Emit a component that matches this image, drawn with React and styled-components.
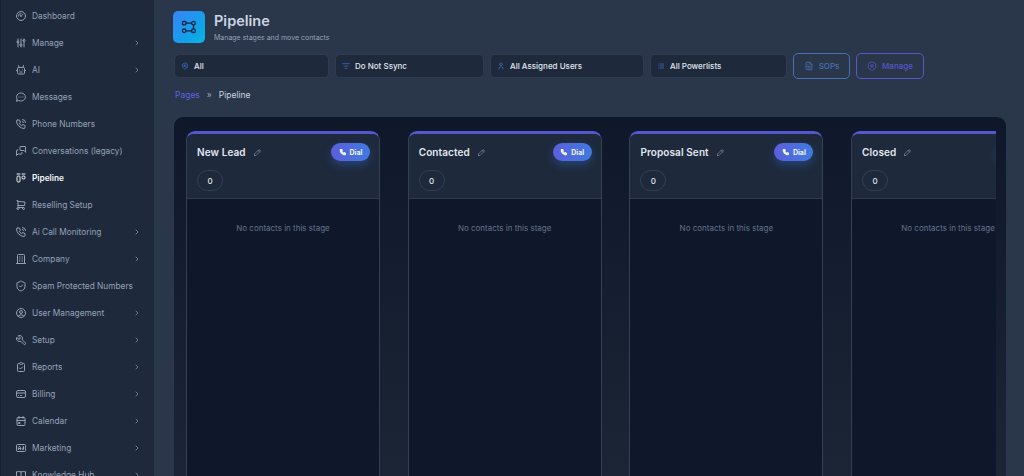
import React from 'react';
import styled, { createGlobalStyle } from 'styled-components';
import {
  TbGauge, TbAdjustments, TbPhoneCall, TbMessages,
  TbShoppingCart, TbBuilding, TbUserCircle, TbTool, TbClipboardCheck,
  TbCreditCard, TbCalendarEvent, TbAd, TbBook, TbChevronRight, TbMapPin,
  TbUser, TbList, TbFileText, TbSettings2, TbPencil, TbPhoneFilled, TbLayoutKanban,
} from 'react-icons/tb';
import { ShieldCheck, ListFilter } from 'lucide-react';

const Global = createGlobalStyle`
  html, body, #root { margin: 0; padding: 0; height: 100%; overflow: hidden; }
  body { font-family: Inter, "Liberation Sans", sans-serif; background: #2a3649; }
`;
const Shell = styled.div`display: flex; height: 100vh; overflow: hidden;`;
const Sidebar = styled.aside`
  width: 155px; flex: none; background: #1e293b; border-right: 1px solid #2a3649;
  box-shadow: inset 1px 0 #161f2e; box-sizing: border-box; padding-top: 2px; overflow: hidden;
`;
const NavRow = styled.div`
  height: 27px; display: flex; align-items: center; padding: 0 13px 0 15px; gap: 5px;
  font-size: 8.3px; font-weight: ${p => (p.$active ? 600 : 400)};
  color: ${p => (p.$active ? '#f1f5f9' : '#94a3b8')};
  svg { flex: none; }
`;
const NavLabel = styled.span`flex: 1; white-space: nowrap;`;
const Main = styled.main`flex: 1; min-width: 0; background: #2a3649; padding: 11px 18px 0 19px; display: flex; flex-direction: column;`;
const Header = styled.header`display: flex; align-items: center; gap: 9px; height: 32px; margin-left: -1px;`;
const Logo = styled.div`
  width: 32px; height: 32px; border-radius: 5px; background: linear-gradient(135deg, #3b82f6, #0ea5e9 70%, #0db4e9);
  display: flex; align-items: center; justify-content: center; color: #0f2444;
`;
const TitleBox = styled.div`display: flex; flex-direction: column; gap: 3px;`;
const Title = styled.h1`margin: 0; font-size: 14.5px; line-height: 18px; font-weight: 600; color: #cbd5e1;`;
const Subtitle = styled.p`margin: 0; font-size: 7px; line-height: 9px; color: #94a3b8;`;
const Filters = styled.div`display: flex; gap: 6px; margin-top: 10px; height: 26px; align-items: center;`;
const Filter = styled.div`
  width: ${p => p.$w}px; height: 24px; box-sizing: border-box; background: #1e293b; border: 1px solid #2f3b50;
  border-radius: 5px; display: flex; align-items: center; gap: 5px; padding: 0 6px; font-size: 8px; font-weight: 500;
  color: #e2e8f0; white-space: nowrap; svg { color: #3b78d0; flex: none; }
`;
const OutlineBtn = styled.div`
  height: 26px; box-sizing: border-box; width: ${p => p.$w}px; border: 1.5px solid ${p => p.$c}; border-radius: 5px;
  display: flex; align-items: center; justify-content: center; gap: 5px; font-size: 8px; font-weight: 500; color: ${p => p.$c};
`;
const Crumbs = styled.nav`display: flex; gap: 7px; align-items: center; height: 12px; margin-top: 10px; font-size: 8.5px; padding-left: 1px;`;
const CrumbLink = styled.span`color: #5b63e0;`;
const CrumbSep = styled.span`color: #94a3b8;`;
const CrumbCurrent = styled.span`color: #cbd5e1;`;
const Board = styled.section`
  flex: 1; margin-top: 16px; background: linear-gradient(180deg, #0f172a 0%, #1c2536 100%);
  border-radius: 9px 9px 0 0; padding: 14px 10px 0 12px; min-height: 0; overflow: hidden;
`;
const Track = styled.div`display: flex; gap: 27.7px; overflow: hidden; height: 100%;`;
const Column = styled.article`
  flex: none; width: 194px; box-sizing: border-box; height: 420px; background: #0f172a;
  border: 1px solid #334155; border-top: 3px solid #5457cd; border-radius: 9px 9px 0 0;
`;
const ColumnHead = styled.div`
  height: 65px; box-sizing: border-box; background: #1e293b; border-bottom: 1px solid #2f3b50;
  padding: 8px 9px 8px 10px; border-radius: 6px 6px 0 0;
`;
const HeadTop = styled.div`display: flex; align-items: center; height: 20px; gap: 7px;`;
const StageName = styled.h3`margin: 0; font-size: 10px; letter-spacing: .1px; font-weight: 600; color: #e2e8f0; white-space: nowrap;`;
const Edit = styled.span`display: flex; color: #7c8798; flex: 1;`;
const Dial = styled.button`
  width: 39px; height: 18px; border: 0; border-radius: 9px; padding: 0; background: linear-gradient(90deg, #5b5fdc, #3f7ae0);
  color: #f1f5f9; font: 700 7px Inter, sans-serif; display: flex; align-items: center; justify-content: center; gap: 3px;
  box-shadow: 0 4px 10px rgba(59, 130, 246, .3); flex: none;
`;
const Count = styled.div`
  width: 26px; height: 21px; margin-top: 8px; box-sizing: border-box; border: 1px solid #334155; border-radius: 11px;
  display: flex; align-items: center; justify-content: center; font-size: 8px; font-weight: 500; color: #e2e8f0;
`;
const Empty = styled.p`margin: 24px 0 0; text-align: center; font-size: 8px; line-height: 10px; color: #64748b; white-space: nowrap;`;

const MessageDots = ({ size }) => (
  <svg width={size} height={size} viewBox="0 0 24 24" fill="none" stroke="currentColor" strokeWidth="2" strokeLinecap="round" strokeLinejoin="round">
    <path d="M3 20l1.3-3.9c-2.3-3.4-1.4-7.9 2.1-10.4 3.5-2.5 8.5-2.3 11.7.5 3.2 2.8 3.7 7.2 1 10.5-2.7 3.3-7.5 4.3-11.4 2.4L3 20" />
    <path d="M8 12h.01M12 12h.01M16 12h.01" />
  </svg>
);
const RobotFace = ({ size }) => (
  <svg width={size} height={size} viewBox="0 0 24 24" fill="none" stroke="currentColor" strokeWidth="2" strokeLinecap="round" strokeLinejoin="round">
    <path d="M5 9a2 2 0 0 1 2-2h10a2 2 0 0 1 2 2v9a2 2 0 0 1-2 2H7a2 2 0 0 1-2-2z" />
    <path d="M8 7 7 3M16 7l1-4M3 13h2M19 13h2M9 12h.01M15 12h.01M10 16h4" />
  </svg>
);
const Shield = ({ size }) => <ShieldCheck size={size} strokeWidth={2} />;

const nav = [
  [TbGauge, 'Dashboard'], [TbAdjustments, 'Manage', 1], [RobotFace, 'AI', 1], [MessageDots, 'Messages'],
  [TbPhoneCall, 'Phone Numbers'], [TbMessages, 'Conversations (legacy)'], [TbLayoutKanban, 'Pipeline', 0, 1],
  [TbShoppingCart, 'Reselling Setup'], [TbPhoneCall, 'Ai Call Monitoring', 1], [TbBuilding, 'Company', 1],
  [Shield, 'Spam Protected Numbers'], [TbUserCircle, 'User Management', 1], [TbTool, 'Setup', 1],
  [TbClipboardCheck, 'Reports', 1], [TbCreditCard, 'Billing', 1], [TbCalendarEvent, 'Calendar', 1],
  [TbAd, 'Marketing', 1], [TbBook, 'Knowledge Hub', 1],
];
const stages = ['New Lead', 'Contacted', 'Proposal Sent', 'Closed'];

const PipelineMark = () => (
  <svg width="16" height="16" viewBox="0 0 16 16" fill="none" stroke="currentColor" strokeWidth="1.3">
    <rect x="1.5" y="2.5" width="3.4" height="3.4" rx=".8" /><circle cx="12.5" cy="4.2" r="1.8" />
    <circle cx="3.2" cy="11.8" r="1.8" /><rect x="10.8" y="10.1" width="3.4" height="3.4" rx=".8" />
    <path d="M5 4.2h5.7M12.5 6v4.1M5 11.8h5.8" />
  </svg>
);

export default function App() {
  return (
    <Shell>
      <Global />
      <Sidebar>
        {nav.map(([Icon, label, more, active]) => (
          <NavRow key={label} $active={active}>
            <Icon size={12} />
            <NavLabel>{label}</NavLabel>
            {more ? <TbChevronRight size={8} /> : null}
          </NavRow>
        ))}
      </Sidebar>
      <Main>
        <Header>
          <Logo><PipelineMark /></Logo>
          <TitleBox><Title>Pipeline</Title><Subtitle>Manage stages and move contacts</Subtitle></TitleBox>
        </Header>
        <Filters>
          <Filter $w={155}><TbMapPin size={8} />All</Filter>
          <Filter $w={149}><ListFilter size={8} />Do Not Ssync</Filter>
          <Filter $w={154}><TbUser size={8} />All Assigned Users</Filter>
          <Filter $w={137}><TbList size={8} />All Powerlists</Filter>
          <OutlineBtn $w={57} $c="#4a6fb5"><TbFileText size={10} />SOPs</OutlineBtn>
          <OutlineBtn $w={68} $c="#5558c9"><TbSettings2 size={10} />Manage</OutlineBtn>
        </Filters>
        <Crumbs>
          <CrumbLink>Pages</CrumbLink><CrumbSep>»</CrumbSep><CrumbCurrent>Pipeline</CrumbCurrent>
        </Crumbs>
        <Board>
          <Track>
            {stages.map(s => (
              <Column key={s}>
                <ColumnHead>
                  <HeadTop>
                    <StageName>{s}</StageName>
                    <Edit><TbPencil size={9} /></Edit>
                    <Dial><TbPhoneFilled size={8} />Dial</Dial>
                  </HeadTop>
                  <Count>0</Count>
                </ColumnHead>
                <Empty>No contacts in this stage</Empty>
              </Column>
            ))}
          </Track>
        </Board>
      </Main>
    </Shell>
  );
}
